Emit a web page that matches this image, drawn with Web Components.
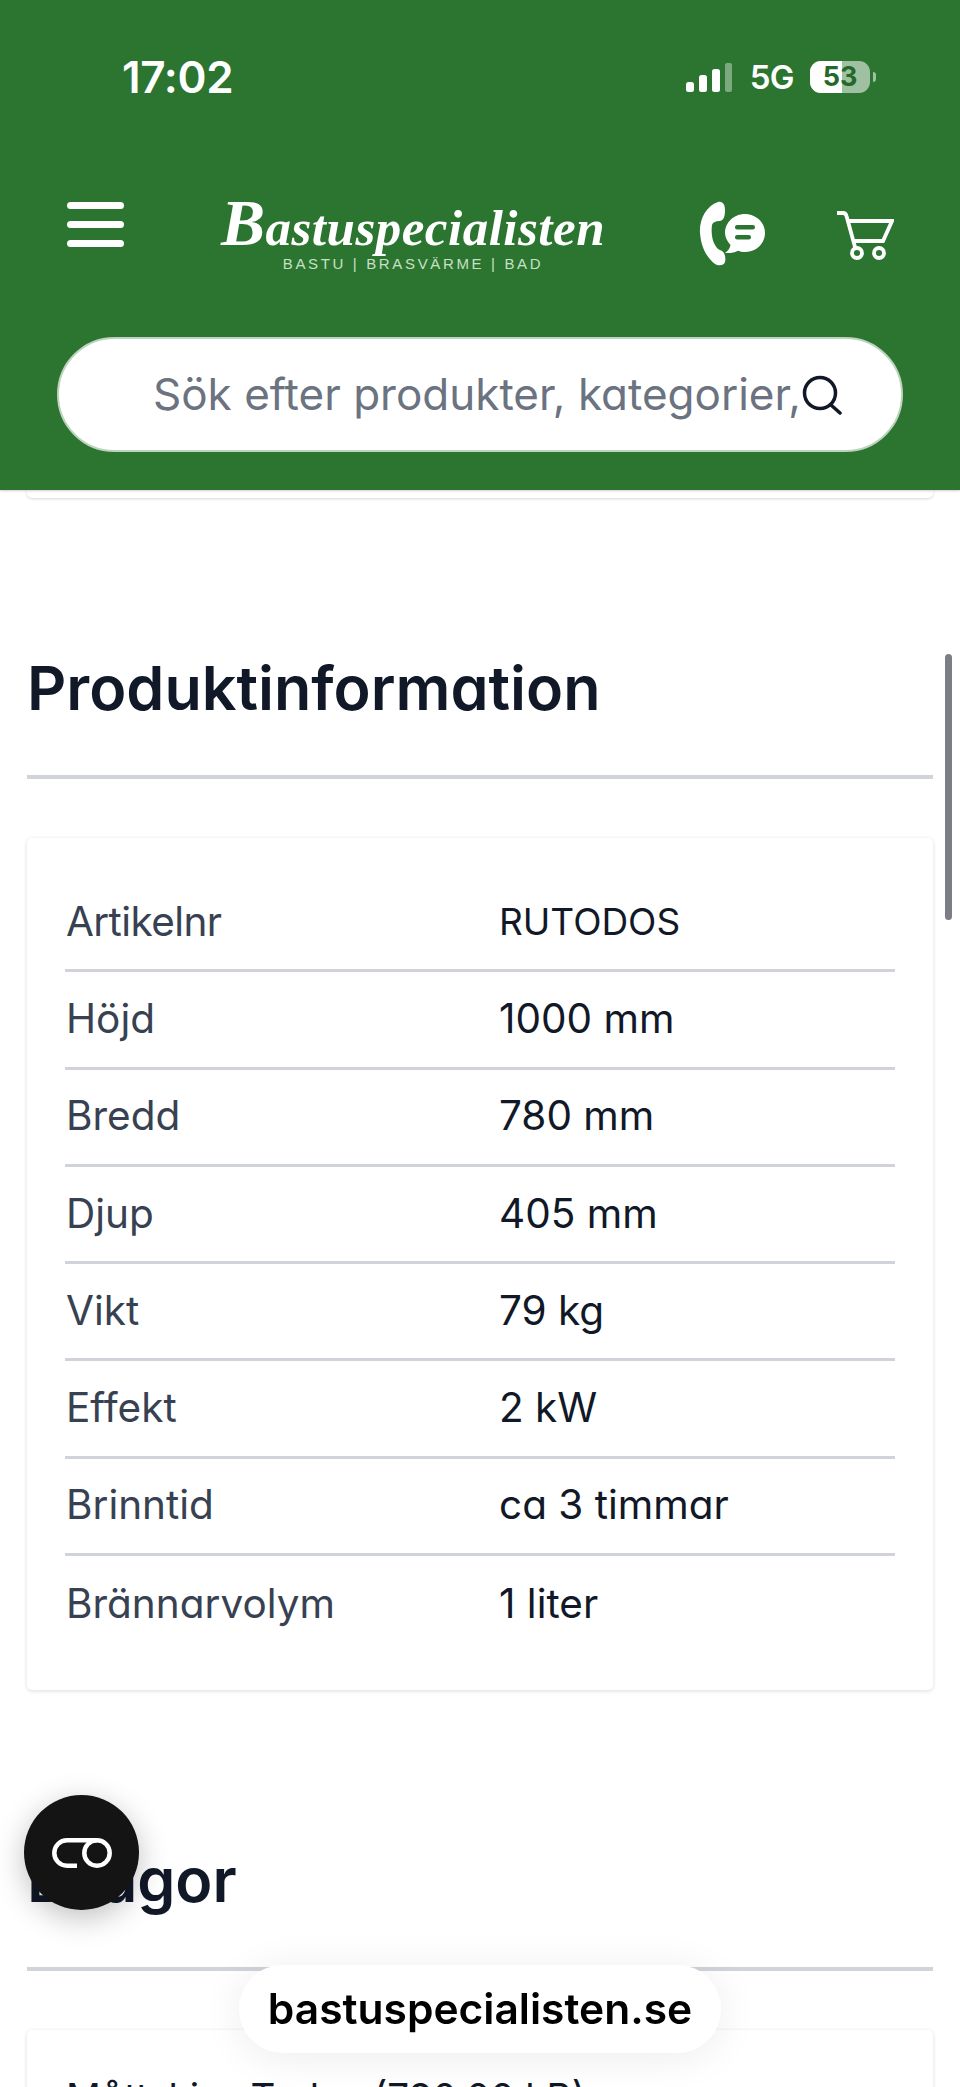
<!DOCTYPE html>
<html lang="sv"><head><meta charset="utf-8"><title>Bastuspecialisten</title>
<style>
html,body{margin:0;padding:0;background:#fff}
body{font-family:Inter,"Liberation Sans",sans-serif;height:2087px;overflow:hidden}
</style></head><body>
<shop-page>
  <site-header></site-header>
  <card-edge></card-edge>
  <section-block title="Produktinformation" style="--top:156px">
    <info-table>
      <info-row label="Artikelnr" value="RUTODOS" style="--ls:-.6px;--vs:37px"></info-row>
      <info-row label="Höjd" value="1000 mm"></info-row>
      <info-row label="Bredd" value="780 mm"></info-row>
      <info-row label="Djup" value="405 mm"></info-row>
      <info-row label="Vikt" value="79 kg"></info-row>
      <info-row label="Effekt" value="2 kW"></info-row>
      <info-row label="Brinntid" value="ca 3 timmar"></info-row>
      <info-row label="Brännarvolym" value="1 liter" last></info-row>
    </info-table>
  </section-block>
  <section-block title="Bilagor" style="--top:156px">
    <attachment-card>Måttskiss Todos (790.00 kB)</attachment-card>
  </section-block>
</shop-page>
<scroll-thumb></scroll-thumb>
<chat-fab></chat-fab>
<url-pill>bastuspecialisten.se</url-pill>
<script>
function def(name,html){
  customElements.define(name,class extends HTMLElement{
    connectedCallback(){
      if(this.shadowRoot)return;
      const r=this.attachShadow({mode:'open'});
      r.innerHTML=typeof html==='function'?html(this):html;
    }
  });
}
def('shop-page',`<style>:host{display:block;height:2087px;overflow:hidden}</style><slot></slot>`);
def('card-edge',`<style>:host{display:block;height:8px;margin:0 27px;background:#fff;border-radius:0 0 5px 5px;box-shadow:0 1px 3px rgba(0,0,0,.16)}</style>`);
def('site-header',`<style>
:host{display:block;background:#2c7530;height:490px;color:#fff;position:relative;z-index:2;box-shadow:0 1px 2px rgba(0,0,0,.2)}
.wrap{display:flex;flex-direction:column;height:100%}
</style><div class="wrap"><status-bar></status-bar><nav-bar></nav-bar><search-box></search-box></div>`);
def('status-bar',`<style>
:host{display:flex;align-items:center;height:78px;margin-top:38px;padding:0 84px 0 122px;justify-content:space-between;flex:none}
.t{font:600 44px/1 Inter,"Liberation Sans",sans-serif;letter-spacing:-.3px}
.r{display:flex;align-items:center}
.g{font:600 33px/1 Inter,"Liberation Sans",sans-serif;margin:0 16px 0 17px;letter-spacing:-.6px}
svg{display:block}
.b{position:relative;width:60px;height:32px;border-radius:11px;overflow:hidden;background:rgba(255,255,255,.55);color:#24692a;font:700 27px/32px Inter,"Liberation Sans",sans-serif;text-align:center}
.b i{position:absolute;left:0;top:0;bottom:0;width:32px;background:#fff}
.b span{position:relative}
.n{width:3px;height:10px;background:rgba(255,255,255,.55);border-radius:0 3px 3px 0;margin-left:3px}
</style><span class="t">17:02</span><div class="r">
<svg width="47" height="29" viewBox="0 0 47 29" fill="#fff"><rect x="0" y="19" width="8" height="10" rx="2.5"/><rect x="13" y="12" width="8" height="17" rx="2.5"/><rect x="26" y="6" width="8" height="23" rx="2.5"/><rect x="39" y="0" width="7" height="29" rx="2" opacity=".38"/></svg>
<span class="g">5G</span><span class="b"><i></i><span>53</span></span><span class="n"></span></div>`);
def('nav-bar',`<style>
:host{display:flex;align-items:center;flex:none;height:96px;margin-top:60px;position:relative;padding-left:67px}
.m{display:flex;flex-direction:column;gap:12px;width:57px}
.m i{display:block;height:7px;background:#fff;border-radius:4px}
.logo{margin:18px 0 0 94px;width:390px;flex:none;display:flex;flex-direction:column;align-items:center;color:#fff}
.s{font:italic 700 51px/56px "Liberation Serif",serif;letter-spacing:.5px;white-space:nowrap}
.s b{font-size:66px;font-weight:700;line-height:56px}
.u{font:500 15px/16px "Liberation Sans",sans-serif;letter-spacing:2.65px;color:#c7e0c4;white-space:nowrap;margin-top:0}
.ph{margin:18px 0 0 90px;flex:none}.ca{margin:22px 0 0 70px;flex:none}
svg{display:block}
</style><div class="m"><i></i><i></i><i></i></div>
<div class="logo"><div class="s"><b>B</b>astuspecialisten</div><div class="u">BASTU | BRASVÄRME | BAD</div></div>
<svg class="ph" width="68" height="66" viewBox="0 0 68 66" fill="#fff"><path d="M20 2C25 1 27 5 27 10C27 16 26 20 22 21C18 21 15 22 14 25C13 32 14 40 17 45C19 49 22 50 24 51C27 53 28 58 27 62C26 66 20 66 17 64C9 58 3 47 2 33C1 20 8 6 20 2Z"/><path d="M47 14c11 0 20 8.500 20 19s-9 19-20 19c-2.500 0-5-.4-7-1.200-3 1.500-8 2.700-13 2.200 3-2 5-5 5.500-8C29 41 27 37 27 33c0-10.500 9-19 20-19z"/><rect x="37" y="25" width="20" height="4.500" rx="2.200" fill="#2c7530"/><rect x="37" y="35" width="16" height="4.500" rx="2.200" fill="#2c7530"/></svg>
<svg class="ca" width="58" height="50" viewBox="0 0 58 50" fill="none" stroke="#fff" stroke-width="3.800"><path d="M1 3h6c2 0 3 1 3.500 3L19 37"/><path d="M12 11H56L47 31H17"/><circle cx="21" cy="43" r="5"/><circle cx="43" cy="43" r="5"/></svg>`);
def('search-box',`<style>
:host{display:flex;align-items:center;flex:none;box-sizing:border-box;height:115px;margin:65px 57px 0;background:#fff;border-radius:58px;padding:0 59px 0 94px;border:2px solid #bcd3be}
span{font:400 44px/1.2 Inter,sans-serif;font-feature-settings:"cv11";color:#6b7280;white-space:nowrap;flex:1;min-width:0}
svg{flex:none}
</style><span>Sök efter produkter, kategorier,</span>
<svg width="40" height="40" viewBox="0 0 40 40" fill="none" stroke="#111827" stroke-width="3.500" stroke-linecap="round"><circle cx="18" cy="18" r="15.500"/><path d="M29 30l9 8"/></svg>`);
def('section-block',h=>`<style>
:host{display:block;padding:var(--top) 27px 0}
h2{margin:0;font:600 61px/68px Inter,sans-serif;font-feature-settings:"cv11";color:#111827;height:68px}
hr{border:0;height:4px;background:#d1d3db;margin:53px 0 59px}
</style><h2>${h.getAttribute('title')}</h2><hr><slot></slot>`);
def('info-table',`<style>
:host{display:block;box-sizing:border-box;background:#fff;border-radius:5px;box-shadow:0 1px 4px rgba(0,0,0,.14);padding:37px 38px;height:852px}
</style><slot></slot>`);
def('info-row',h=>`<style>
:host{display:grid;box-sizing:border-box;grid-template-columns:433px 1fr;align-items:center;height:97.25px;padding-left:1px;font:400 40.5px/1.2 Inter,sans-serif;font-feature-settings:"cv11";${h.hasAttribute('last')?'':'border-bottom:3px solid #d1d3db;'}}
.l{color:#374151;letter-spacing:var(--ls,0)}.v{color:#111827;font-size:var(--vs,40.5px)}
</style><span class="l">${h.getAttribute('label')}</span><span class="v">${h.getAttribute('value')}</span>`);
def('attachment-card',`<style>
:host{display:block;background:#fff;border-radius:5px;box-shadow:0 1px 4px rgba(0,0,0,.14);padding:44px 39px 60px;font:400 38.5px/1.2 Inter,sans-serif;font-feature-settings:"cv11";color:#111827}
</style><slot></slot>`);
def('scroll-thumb',`<style>:host{position:fixed;left:945px;top:654px;width:7px;height:266px;border-radius:4px;background:#7b7f85;z-index:5}</style>`);
def('chat-fab',`<style>:host{position:fixed;left:24px;top:1795px;width:115px;height:115px;border-radius:50%;background:#141414;display:flex;align-items:center;justify-content:center;box-shadow:0 8px 30px rgba(0,0,0,.25);z-index:6}
svg{display:block}</style><svg width="60" height="30" viewBox="0 0 60 30" fill="none" stroke="#fff" stroke-width="4.500"><path d="M25 27.700H15a12.700 12.700 0 0 1 0-25.400H45"/><circle cx="45" cy="15" r="12.700"/></svg>`);
def('url-pill',`<style>:host{position:fixed;left:239px;top:1965px;width:482px;height:88px;border-radius:44px;background:#fff;display:flex;align-items:center;justify-content:center;font:600 42.5px/1 Inter,"Liberation Sans",sans-serif;color:#000;box-shadow:0 4px 40px rgba(0,0,0,.08);z-index:6}</style><slot></slot>`);
</script>
</body></html>
